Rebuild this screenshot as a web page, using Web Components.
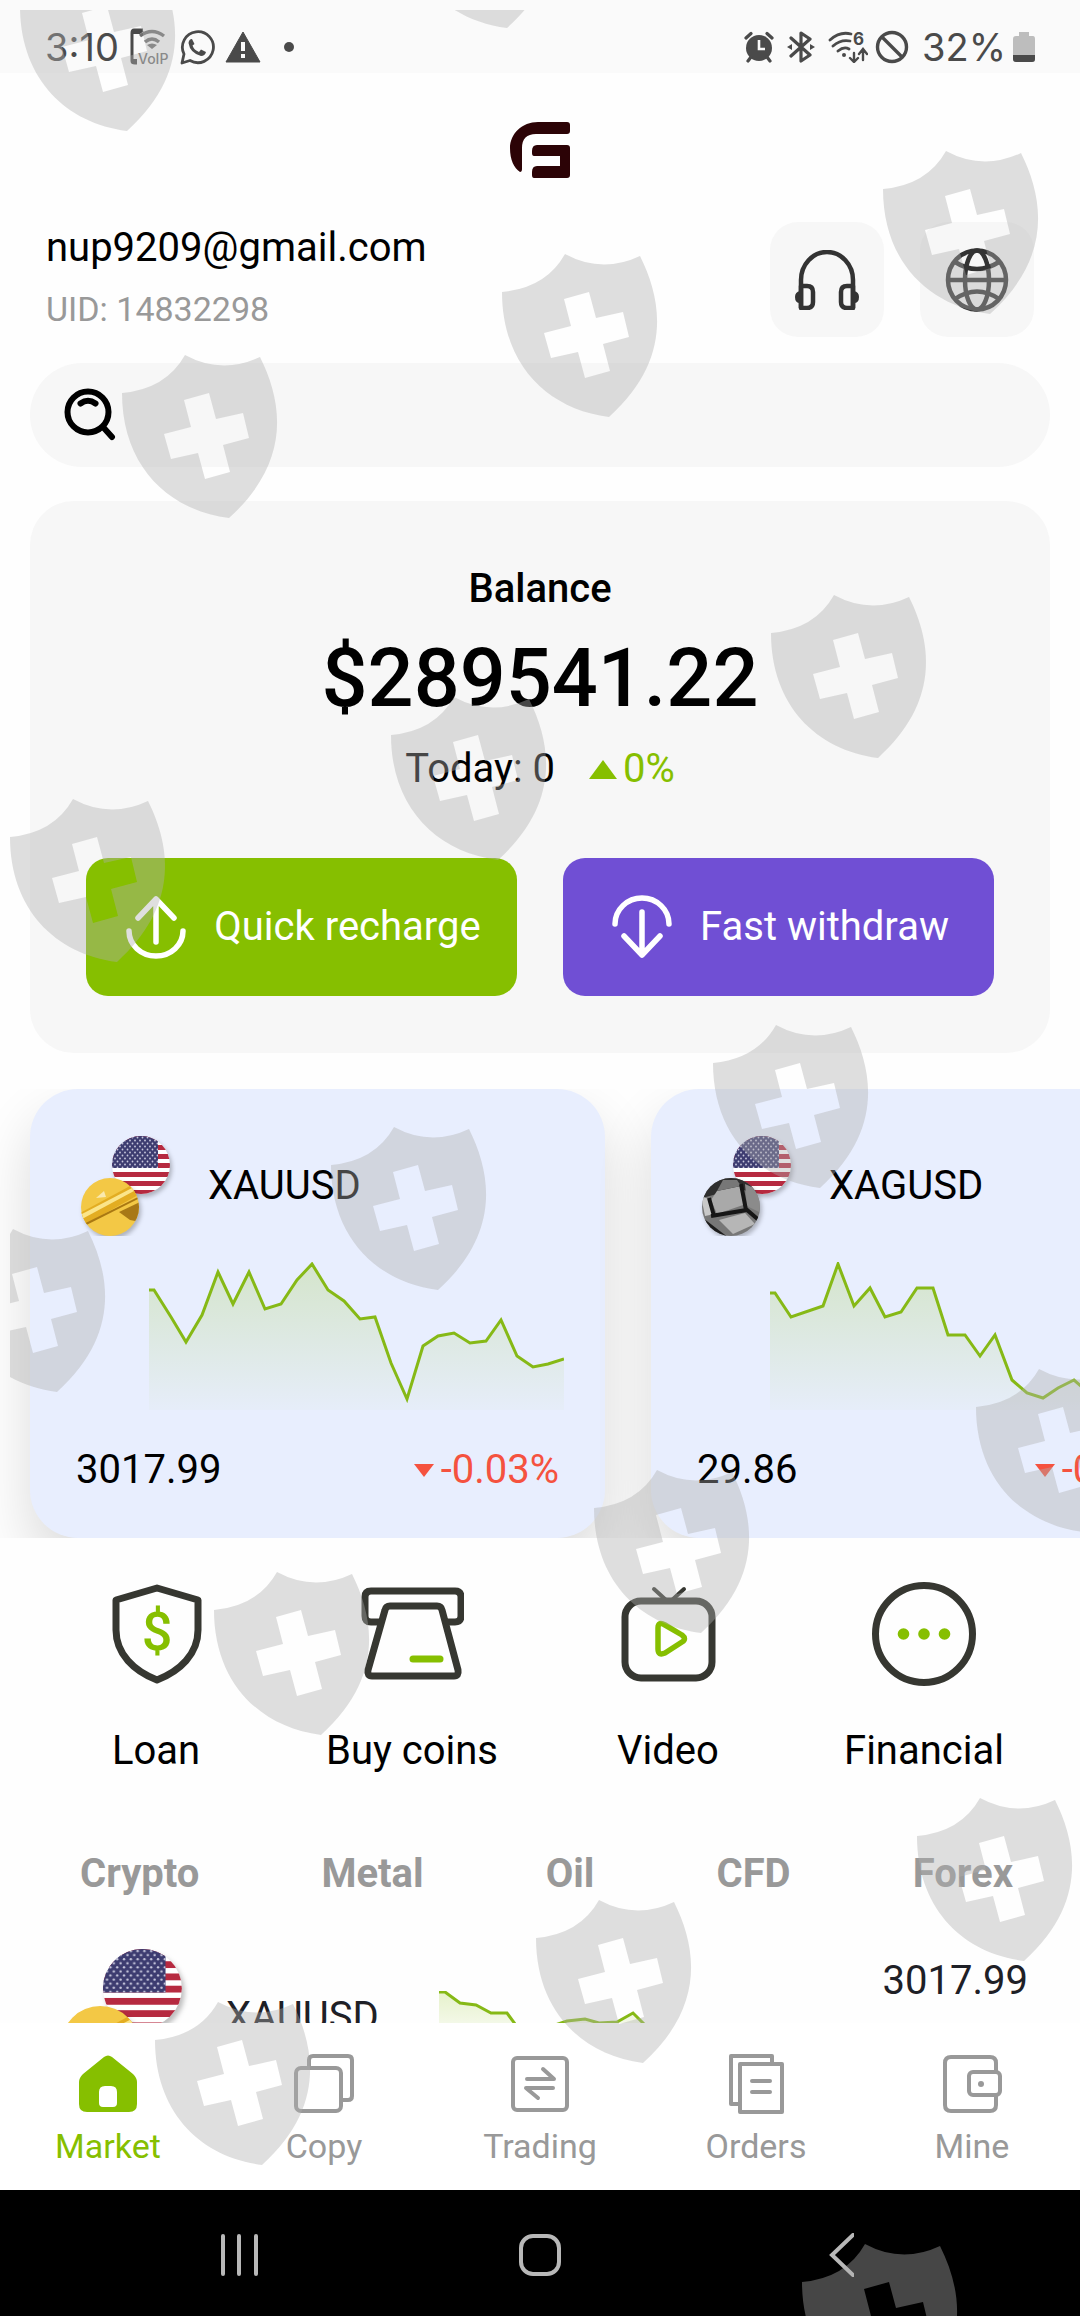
<!DOCTYPE html>
<html lang="en">
<head>
<meta charset="utf-8">
<meta name="viewport" content="width=device-width, initial-scale=1">
<title>Market</title>
<style>
  body {
    margin: 0;
    background: #fefefe;
    color: #000;
    font: 40px/52px Roboto, "Noto Sans", sans-serif;
  }
</style>
</head>
<body>
<market-app></market-app>

<script>
const ICONS = {
  voip: [40, 40, `
    <path d="M14 3H5Q3 3 3 6V34Q3 36 6 36H8" fill="none" stroke="#4a4a4a" stroke-width="3"/>
    <path d="M3 4H15L11 7H3ZM3 32H8V37H5Q3 37 3 35Z" fill="#4a4a4a"/>
    <g fill="none" stroke="#707070" stroke-width="3.4"><path d="M11 9Q23 0 35 9M16 15Q23 9 30 15"/></g>
    <path d="M18 18Q23 15 28 18L23 22Z" fill="#707070"/>
    <text x="9" y="37" font-size="14" font-weight="500" fill="#707070">VoIP</text>`],
  whatsapp: [36, 36, `
    <path d="M3 34L5 25A15.500 15.500 0 1 1 11 31.500Z" fill="none" stroke="#4a4a4a" stroke-width="2.800" stroke-linejoin="round"/>
    <path d="M13 10Q10 10 9.500 14Q11 24 22 27Q26 27 27 23L22 20.500L20 23Q15 21 13.500 16.500L15.500 15Z" fill="#4a4a4a"/>`],
  warning: [36, 32, `
    <path d="M18 1L35 31H1Z" fill="#4a4a4a" stroke="#4a4a4a" stroke-linejoin="round"/>
    <path d="M16 11H20V20H16ZM16 23H20V27H16Z" fill="#fafafa"/>`],
  dot: [12, 12, `<circle cx="6" cy="6" r="5" fill="#4a4a4a"/>`],
  alarm: [30, 32, `
    <circle cx="15" cy="17" r="13" fill="#4a4a4a"/>
    <path d="M15 9V18H21" fill="none" stroke="#fafafa" stroke-width="2.600"/>
    <path d="M2 7L7 2.500M28 7L23 2.500M4 30L7 26M26 30L23 26" stroke="#4a4a4a" stroke-width="3.200" stroke-linecap="round"/>`],
  bluetooth: [28, 32, `
    <path d="M4 7L23 24L14 30V2L23 8L4 25" fill="none" stroke="#4a4a4a" stroke-width="3.200" stroke-linejoin="round" stroke-linecap="round"/>
    <path d="M0 16L5 13V19ZM28 16L23 13V19Z" fill="#4a4a4a"/>`],
  wifi: [40, 32, `
    <g fill="none" stroke="#4a4a4a" stroke-width="2.800" stroke-linecap="round">
      <path d="M2 9Q12 0 23 3M5 15Q13 8 22 10M10 20Q16 15 21 18"/>
      <path d="M26 22V30M22 27L26 31L30 27M35 29V19M31 23L35 18L39 23" stroke-width="2.400"/>
    </g>
    <circle cx="16" cy="24" r="2" fill="#4a4a4a"/>
    <text x="25" y="14" font-size="17" font-weight="700" fill="#4a4a4a">6</text>`],
  blocked: [34, 34, `
    <circle cx="17" cy="17" r="14.500" fill="none" stroke="#4a4a4a" stroke-width="3.400"/>
    <path d="M7 7L27 27" stroke="#4a4a4a" stroke-width="3.400"/>`],
  battery: [22, 32, `
    <path d="M6 1H16V5H20Q22 5 22 8V29Q22 31 19 31H3Q0 31 0 28V8Q0 5 3 5H6Z" fill="#bdbdbd"/>
    <path d="M0 24H22V28Q22 31 19 31H3Q0 31 0 28Z" fill="#4a4a4a"/>`],
  logo: [60, 56, `
    <path d="M57 0H28C12 0 0 12 0 26C0 38 4 46 10 50Q12 50 12 47V26Q12 12 26 12H57Q60 12 60 9V3Q60 0 57 0Z" fill="#2c0306"/>
    <path d="M27 23H57Q60 23 60 26V53Q60 56 57 56H24Q22 56 22 53V50Q22 44 27 44H50V34H24Q22 34 22 31V29Q22 23 27 23Z" fill="#2c0306"/>`],
  headset: [64, 60, `
    <g fill="none" stroke="#333" stroke-width="4.500" stroke-linejoin="round">
      <path d="M6 58V30A26 28 0 0 1 58 30V58"/>
      <path d="M6 36H12Q18 36 18 42V52Q18 58 12 58H6ZM58 36H52Q46 36 46 42V52Q46 58 52 58H58Z"/>
    </g>
    <path d="M5 41V53Q0 53 0 47Q0 42 5 41ZM59 41V53Q64 53 64 47Q64 42 59 41Z" fill="#333"/>`],
  globe: [64, 64, `
    <g fill="none" stroke="#333" stroke-width="4.500">
      <ellipse cx="32" cy="32" rx="29" ry="29.500"/>
      <ellipse cx="32" cy="32" rx="12" ry="29.500"/>
      <path d="M2 32H62M10 14Q32 28 54 14M10 51Q32 36 54 51"/>
    </g>`],
  search: [52, 54, `
    <g fill="none" stroke="#000" stroke-width="6" stroke-linecap="round">
      <circle cx="24" cy="24" r="20.500"/><path d="M39 39L48 49M16.500 15.500Q24 10 31.500 15.500"/>
    </g>`],
  recharge: [60, 64, `
    <g fill="none" stroke="#fff" stroke-width="5.500" stroke-linecap="round" stroke-linejoin="round">
      <path d="M30 47V4M12 23L30 4L48 23"/><path d="M3 36A27 25 0 0 0 57 36"/>
    </g>`],
  withdraw: [60, 64, `
    <g fill="none" stroke="#fff" stroke-width="5.500" stroke-linecap="round" stroke-linejoin="round">
      <path d="M30 17V60M12 41L30 60L48 41"/><path d="M3 29A27 26 0 0 1 57 29"/>
    </g>`],
  loan: [104, 104, `
    <path d="M53 6L94 18V48C94 72 76 89 53 98C30 89 12 72 12 48V18Z" fill="none" stroke="#363731" stroke-width="7" stroke-linejoin="round"/>
    <text x="53" y="68" font-size="54" font-weight="500" text-anchor="middle" fill="#86bf00">$</text>`],
  coins: [104, 104, `
    <g fill="none" stroke="#363731" stroke-width="7" stroke-linejoin="round">
      <path d="M19 40H11Q5 40 5 34V15Q5 9 11 9H95Q101 9 101 15V34Q101 40 95 40H87"/>
      <path d="M30 24H77Q81 24 82 28L98 88Q99 94 94 94H12Q7 94 8 88L25 28Q26 24 30 24Z"/>
    </g>
    <path d="M53 77H80" stroke="#86bf00" stroke-width="7" stroke-linecap="round"/>`],
  video: [104, 104, `
    <path d="M38 7L50 18M68 7L56 18" fill="none" stroke="#363731" stroke-width="4" stroke-linecap="round"/>
    <rect x="9" y="19" width="87" height="77" rx="16" fill="none" stroke="#363731" stroke-width="7"/>
    <path d="M42 46Q42 39 49 43L66 53Q71 57 66 60L49 71Q42 74 42 67Z" fill="none" stroke="#86bf00" stroke-width="5.500" stroke-linejoin="round"/>`],
  financial: [104, 104, `
    <circle cx="52" cy="52" r="48.500" fill="none" stroke="#363731" stroke-width="7"/>
    <g fill="#86bf00"><circle cx="31.500" cy="52" r="5.800"/><circle cx="52" cy="52" r="5.800"/><circle cx="72.500" cy="52" r="5.800"/></g>`],
  home: [60, 60, `
    <path fill-rule="evenodd" fill="#86bf00" d="M26 3Q30 0 34 3L55 20Q59 24 59 28V50Q59 58 51 58H9Q1 58 1 50V28Q1 24 5 20ZM27 32Q21 32 21 38V49Q21 53 25 53H35Q39 53 39 49V38Q39 32 33 32Z"/>`],
  copy: [60, 60, `
    <g fill="none" stroke="#999" stroke-width="4" stroke-linejoin="round">
      <rect x="2" y="14" width="45" height="43" rx="5"/>
      <path d="M15 13V6Q15 2 19 2H54Q58 2 58 6V42Q58 46 54 46H48"/>
    </g>`],
  trading: [60, 60, `
    <g fill="none" stroke="#999" stroke-width="4" stroke-linecap="round" stroke-linejoin="round">
      <rect x="3" y="4" width="54" height="52" rx="4"/>
      <path d="M17 25H44L33 15M43 34H16L28 44"/>
    </g>`],
  orders: [60, 60, `
    <g fill="none" stroke="#999" stroke-width="4" stroke-linejoin="round" stroke-linecap="round">
      <path d="M12 50H5V2H46V9"/><path d="M14 10H56V58H14Z"/><path d="M26 27H44M26 38H44"/>
    </g>`],
  wallet: [60, 60, `
    <g fill="none" stroke="#999" stroke-width="4" stroke-linejoin="round">
      <path d="M54 17V9Q54 3 48 3H9Q3 3 3 9V51Q3 57 9 57H48Q54 57 54 51V42"/>
      <rect x="27" y="18" width="31" height="23" rx="4"/>
    </g>
    <circle cx="39" cy="30" r="3" fill="#999"/>`],
  recents: [42, 44, `<path d="M4 3V41M20 3V41M37 3V41" stroke="#b8b8b8" stroke-width="4" stroke-linecap="round"/>`],
  circle: [42, 44, `<rect x="2" y="3" width="38" height="38" rx="12" fill="none" stroke="#b8b8b8" stroke-width="4"/>`],
  back: [28, 44, `<path d="M27 2L6 22L27 42" fill="none" stroke="#b8b8b8" stroke-width="4" stroke-linecap="round"/>`],
};

const SPARKS = {
  gold: '0,28 5,28 22,55 37,80 53,53 69,10 84,42 100,10 116,47 132,42 148,18 163,2 179,28 195,39 211,57 226,55 242,101 258,137 274,84 289,74 305,71 321,81 337,79 352,58 368,94 384,105 399,102 415,97',
  silver: '0,31 5,31 21,55 53,44 68,2 84,44 100,26 115,55 131,50 147,26 163,26 178,73 195,73 210,94 225,73 242,118 257,131 273,136 288,126 304,118 320,132 336,128 352,110 368,120 384,125 399,118 415,114',
  mini: '0,1 6,1 21,12 37,14 52,22 68,22 90,52 110,36 128,30 146,28 160,32 178,31 194,22 208,36',
};

// Small base class: each element only has to give its markup.
class BaseElement extends HTMLElement {
  connectedCallback() {
    if (this.shadowRoot) return;
    const template = document.createElement('template');
    template.innerHTML = this.render();
    this.attachShadow({ mode: 'open' }).appendChild(template.content.cloneNode(true));
  }
}

class AppIcon extends BaseElement {
  render() {
    const [w, h, body] = ICONS[this.getAttribute('name')];
    return `
      <style>:host { display: block; flex: none; } svg { display: block; }</style>
      <svg width="${w}" height="${h}" viewBox="0 0 ${w} ${h}" aria-hidden="true">${body}</svg>`;
  }
}

class PairIcon extends BaseElement {
  render() {
    const metal = this.getAttribute('metal') === 'silver'
      ? `<circle cx="34" cy="71" r="29" fill="#777"/>
         <g clip-path="url(#coin)">
           <path d="M5 42H66V58L46 54L20 58L5 62Z" fill="#2e2e2e"/>
           <path d="M14 64L20 55L44 50L49 68L20 78Z" fill="#a9a9a9"/>
           <path d="M20 55L44 50L40 44H26Z" fill="#777"/>
           <path d="M48 48L66 56L62 76L50 70Z" fill="#8b8b8b"/>
           <path d="M4 60L14 64L18 78L8 80Z" fill="#c8c8c8"/>
           <path d="M44 48L49 74M14 80L50 74L64 86M12 62L17 80" stroke="#161616" stroke-width="4" fill="none"/>
           <path d="M6 82L32 102H16Z" fill="#1c1c1c"/>
           <path d="M22 84L48 77L58 88L36 98Z" fill="#b6b6b6"/>
         </g>`
      : `<circle cx="34" cy="71" r="29" fill="#f3c845"/>
         <g clip-path="url(#coin)">
           <path d="M4 77L54 50L64 58L8 89Z" fill="#e3ad22"/>
           <path d="M4 79L56 52L58 55L6 83Z" fill="#fbe58a"/>
           <path d="M8 89L64 61" stroke="#a97812" stroke-width="2"/>
           <path d="M43 76L64 66V86L54 84Z" fill="#a87816"/>
           <path d="M20 62L28 55L30 61Z" fill="#fae9ae"/>
         </g>`;
    let stripes = '';
    for (let y = 0; y < 59; y += 9) stripes += `<rect x="36" y="${y}" width="60" height="5" fill="#b62a40"/>`;
    return `
      <style>
        :host { display: block; flex: none; width: 100px; }
        svg { display: block; width: 100%; height: auto; }
        .round { filter: drop-shadow(2px 3px 2px rgba(0, 0, 0, .25)); }
      </style>
      <svg viewBox="0 0 100 100" aria-hidden="true">
        <clipPath id="flag"><circle cx="65" cy="29" r="29"/></clipPath>
        <clipPath id="coin"><circle cx="34" cy="71" r="29"/></clipPath>
        <pattern id="stars" width="5" height="6" patternUnits="userSpaceOnUse">
          <circle cx="1.500" cy="1.500" r="0.900" fill="#c9c9de"/><circle cx="4" cy="4.500" r="0.900" fill="#c9c9de"/>
        </pattern>
        <g class="round"><g clip-path="url(#flag)">
          <rect x="36" width="60" height="59" fill="#fff"/>${stripes}
          <rect x="36" width="46" height="32" fill="#3d3c70"/><rect x="36" width="46" height="32" fill="url(#stars)"/>
        </g></g>
        <g class="round">${metal}</g>
      </svg>`;
  }
}

class SparkLine extends BaseElement {
  render() {
    const points = SPARKS[this.getAttribute('series')];
    const w = this.getAttribute('w');
    const h = this.getAttribute('h');
    const last = points.split(' ').pop().split(',')[0];
    return `
      <style>:host { display: block; } svg { display: block; }</style>
      <svg width="${w}" height="${h}" viewBox="0 0 ${w} ${h}" aria-hidden="true">
        <linearGradient id="fade" x1="0" y1="0" x2="0" y2="1">
          <stop offset="0" stop-color="#86bf00" stop-opacity=".2"/>
          <stop offset="1" stop-color="#86bf00" stop-opacity=".02"/>
        </linearGradient>
        <polygon points="0,${h} ${points} ${last},${h}" fill="url(#fade)"/>
        <polyline points="${points}" fill="none" stroke="#86b916" stroke-width="3"/>
      </svg>`;
  }
}

class StatusBar extends BaseElement {
  render() {
    return `
      <style>
        :host { display: flex; align-items: center; justify-content: space-between; box-sizing: border-box;
          flex: none; height: 73px; padding: 0 45px; background: #fafafa; color: #4a4a4a;
          font-family: Inter, Roboto, sans-serif; font-size: 38px; line-height: 52px; }
        .side { display: flex; align-items: center; padding-top: 20px; }
        .left { gap: 10px; }
        .right { gap: 13px; }
        .dot { margin-left: 12px; }
        .tight { display: flex; align-items: center; gap: 7px; }
      </style>
      <div class="side left">
        <span>3:10</span>
        <app-icon name="voip"></app-icon><app-icon name="whatsapp"></app-icon>
        <app-icon name="warning"></app-icon><app-icon class="dot" name="dot"></app-icon>
      </div>
      <div class="side right">
        <app-icon name="alarm"></app-icon><app-icon name="bluetooth"></app-icon>
        <div class="tight"><app-icon name="wifi"></app-icon><app-icon name="blocked"></app-icon></div>
        <div class="tight"><span>32%</span><app-icon name="battery"></app-icon></div>
      </div>`;
  }
}

class AccountHeader extends BaseElement {
  render() {
    return `
      <style>
        :host { display: block; padding: 49px 46px 0; }
        .logo { display: flex; justify-content: center; margin-bottom: 44px; }
        .row { display: flex; align-items: flex-start; gap: 36px; }
        .who { flex: 1; display: flex; flex-direction: column; gap: 13px; }
        .uid { color: #999; font-size: 34px; line-height: 44px; }
        button { display: flex; align-items: center; justify-content: center; width: 114px; height: 115px;
          padding: 0; border: 0; border-radius: 28px; background: #f7f7f7; }
      </style>
      <div class="logo"><app-icon name="logo"></app-icon></div>
      <div class="row">
        <div class="who">
          <div><slot name="email"></slot></div>
          <div class="uid"><slot name="uid"></slot></div>
        </div>
        <button aria-label="Support"><app-icon name="headset"></app-icon></button>
        <button aria-label="Language"><app-icon name="globe"></app-icon></button>
      </div>`;
  }
}

class SearchBox extends BaseElement {
  render() {
    return `
      <style>
        :host { display: block; margin: 26px 30px 0; }
        label { display: flex; align-items: center; gap: 16px; height: 104px; padding: 0 34px; border-radius: 52px; background: #f7f7f7; }
        input { flex: 1; min-width: 0; border: 0; outline: 0; background: none; font: inherit; }
      </style>
      <label><app-icon name="search"></app-icon><input type="search" aria-label="Search"></label>`;
  }
}

class BalanceCard extends BaseElement {
  render() {
    return `
      <style>
        :host { display: block; margin: 34px 30px 0; padding: 62px 56px 57px; border-radius: 44px; background: #f7f7f7; text-align: center; }
        .title { font-weight: 500; }
        .amount { margin: 16px 0; font-size: 81px; line-height: 96px; font-weight: 500; }
        .today { display: flex; justify-content: center; align-items: center; gap: 34px; }
        .up { display: flex; align-items: center; gap: 6px; color: #86bf00; }
        .up::before { content: ""; border: 14px solid transparent; border-top: 0; border-bottom: 19px solid #86bf00; }
        .actions { display: flex; gap: 46px; margin-top: 63px; }
        button { flex: 1; display: flex; align-items: center; justify-content: center; gap: 28px; height: 138px; padding: 0 0 0 4px;
          border: 0; border-radius: 22px; background: #86bf00; color: #fff; font: inherit; }
        .out { background: #704fd4; }
      </style>
      <div class="title">Balance</div>
      <div class="amount"><slot name="amount"></slot></div>
      <div class="today"><span><slot name="today"></slot></span><span class="up"><slot name="change"></slot></span></div>
      <div class="actions">
        <button><app-icon name="recharge"></app-icon><span>Quick recharge</span></button>
        <button class="out"><app-icon name="withdraw"></app-icon><span>Fast withdraw</span></button>
      </div>`;
  }
}

class QuoteCard extends BaseElement {
  render() {
    const metal = this.getAttribute('metal');
    return `
      <style>
        :host { display: block; flex: none; box-sizing: border-box; width: 575px; padding: 47px 42px 42px 46px;
          border-radius: 48px; background: #e8eefe; box-shadow: 0 28px 56px rgba(0, 0, 0, .14); }
        .head { display: flex; align-items: center; gap: 32px; }
        spark-line { margin: 26px 0 34px 73px; }
        .foot { display: flex; justify-content: space-between; padding-right: 4px; }
        .down { display: flex; align-items: center; gap: 7px; color: #f5523f; }
        .down::before { content: ""; border: 10px solid transparent; border-bottom: 0; border-top: 13px solid #f5523f; }
      </style>
      <div class="head"><pair-icon metal="${metal}"></pair-icon><slot name="symbol"></slot></div>
      <spark-line series="${metal}" w="415" h="148"></spark-line>
      <div class="foot"><slot name="price"></slot><span class="down"><slot name="change"></slot></span></div>`;
  }
}

class QuoteStrip extends BaseElement {
  render() {
    return `
      <style>
        :host { display: flex; flex: none; gap: 46px; margin-top: 36px; padding: 0 30px; overflow: hidden; }
      </style>
      <slot></slot>`;
  }
}

class QuickLink extends BaseElement {
  render() {
    return `
      <style>
        :host { display: block; flex: 1; }
        a { display: flex; flex-direction: column; align-items: center; gap: 39px; color: inherit; text-decoration: none; }
      </style>
      <a href="#"><app-icon name="${this.getAttribute('icon')}"></app-icon><span><slot></slot></span></a>`;
  }
}

class QuickLinks extends BaseElement {
  render() {
    return `
      <style>:host { display: flex; padding: 44px 28px 0; }</style>
      <slot></slot>`;
  }
}

class MarketTabs extends BaseElement {
  render() {
    return `
      <style>
        :host { display: flex; justify-content: space-between; padding: 71px 67px 0 80px; }
        button { padding: 0; border: 0; background: none; color: #999; font: inherit; font-weight: 700; }
      </style>
      <button>Crypto</button><button>Metal</button><button>Oil</button><button>CFD</button><button>Forex</button>`;
  }
}

class MarketRow extends BaseElement {
  render() {
    return `
      <style>
        :host { display: grid; grid-template-columns: 136px 177px 1fr auto; align-items: center; column-gap: 36px;
          padding: 49px 52px 0 54px; color: #1e2026; }
        pair-icon { width: 136px; }
        .price { align-self: start; padding-top: 6px; }
      </style>
      <pair-icon metal="gold"></pair-icon>
      <span><slot name="symbol"></slot></span>
      <spark-line series="mini" w="208" h="52"></spark-line>
      <span class="price"><slot name="price"></slot></span>`;
  }
}

class TabBar extends BaseElement {
  render() {
    const tabs = [['home', 'Market'], ['copy', 'Copy'], ['trading', 'Trading'], ['orders', 'Orders'], ['wallet', 'Mine']];
    return `
      <style>
        :host { display: block; flex: none; background: #fff; }
        nav { display: flex; padding: 31px 0 22px; font-size: 34px; line-height: 44px; }
        a { flex: 1; display: flex; flex-direction: column; align-items: center; gap: 10px; color: #999; text-decoration: none; }
        a[aria-current] { color: #86bf00; }
      </style>
      <nav>${tabs.map(([icon, label], i) =>
        `<a href="#"${i === 0 ? ' aria-current="page"' : ''}><app-icon name="${icon}"></app-icon><span>${label}</span></a>`).join('')}</nav>`;
  }
}

class SystemNav extends BaseElement {
  render() {
    return `
      <style>
        :host { display: flex; flex: none; height: 126px; padding: 0 90px; background: #000; }
        button { flex: 1; display: flex; align-items: center; justify-content: center; padding: 4px 0 0; border: 0; background: none; }
      </style>
      <button aria-label="Recent apps"><app-icon name="recents"></app-icon></button>
      <button aria-label="Home"><app-icon name="circle"></app-icon></button>
      <button aria-label="Back"><app-icon name="back"></app-icon></button>`;
  }
}

// Translucent shields scattered over the whole screen.
class ShieldLayer extends BaseElement {
  render() {
    const spots = [[20, -32], [400, -135], [883, 151], [502, 254], [122, 355], [771, 595], [391, 697], [10, 799], [713, 1025],
      [331, 1127], [-50, 1229], [976, 1369], [594, 1470], [214, 1572], [917, 1798], [536, 1900], [155, 2002], [802, 2244]];
    return `
      <style>
        :host { position: absolute; inset: 10px 0 0 10px; overflow: hidden; pointer-events: none; }
        svg { display: block; width: 100%; height: 100%; }
      </style>
      <svg aria-hidden="true">
        <defs><path id="shield" fill-rule="evenodd" d="M0 38Q44 34 63 0Q100 20 138 2C162 50 168 108 107 163C45 155 0 110 0 38Z
          M62 45L69 72L42 79L49 104L76 98L83 124L108 117L101 90L127 83L121 58L94 64L87 38Z"/></defs>
        <g fill="#aeaeae" fill-opacity=".4">
          ${spots.map(([x, y]) => `<use href="#shield" x="${x - 10}" y="${y - 10}"/>`).join('')}
        </g>
      </svg>`;
  }
}

class MarketApp extends BaseElement {
  render() {
    return `
      <style>
        :host { position: relative; display: flex; flex-direction: column; height: 100vh; overflow: hidden; }
        main { flex: 1; min-height: 0; overflow: hidden; }
      </style>
      <status-bar></status-bar>
      <main>
        <account-header>
          <span slot="email">nup9209@gmail.com</span>
          <span slot="uid">UID: 14832298</span>
        </account-header>
        <search-box></search-box>
        <balance-card>
          <span slot="amount">$289541.22</span>
          <span slot="today">Today: 0</span>
          <span slot="change">0%</span>
        </balance-card>
        <quote-strip>
          <quote-card metal="gold">
            <span slot="symbol">XAUUSD</span><span slot="price">3017.99</span><span slot="change">-0.03%</span>
          </quote-card>
          <quote-card metal="silver">
            <span slot="symbol">XAGUSD</span><span slot="price">29.86</span><span slot="change">-0.06%</span>
          </quote-card>
        </quote-strip>
        <quick-links>
          <quick-link icon="loan">Loan</quick-link>
          <quick-link icon="coins">Buy coins</quick-link>
          <quick-link icon="video">Video</quick-link>
          <quick-link icon="financial">Financial</quick-link>
        </quick-links>
        <market-tabs></market-tabs>
        <market-row><span slot="symbol">XAUUSD</span><span slot="price">3017.99</span></market-row>
      </main>
      <tab-bar></tab-bar>
      <system-nav></system-nav>
      <shield-layer></shield-layer>`;
  }
}

customElements.define('app-icon', AppIcon);
customElements.define('pair-icon', PairIcon);
customElements.define('spark-line', SparkLine);
customElements.define('status-bar', StatusBar);
customElements.define('account-header', AccountHeader);
customElements.define('search-box', SearchBox);
customElements.define('balance-card', BalanceCard);
customElements.define('quote-card', QuoteCard);
customElements.define('quote-strip', QuoteStrip);
customElements.define('quick-link', QuickLink);
customElements.define('quick-links', QuickLinks);
customElements.define('market-tabs', MarketTabs);
customElements.define('market-row', MarketRow);
customElements.define('tab-bar', TabBar);
customElements.define('system-nav', SystemNav);
customElements.define('shield-layer', ShieldLayer);
customElements.define('market-app', MarketApp);
</script>
</body>
</html>
